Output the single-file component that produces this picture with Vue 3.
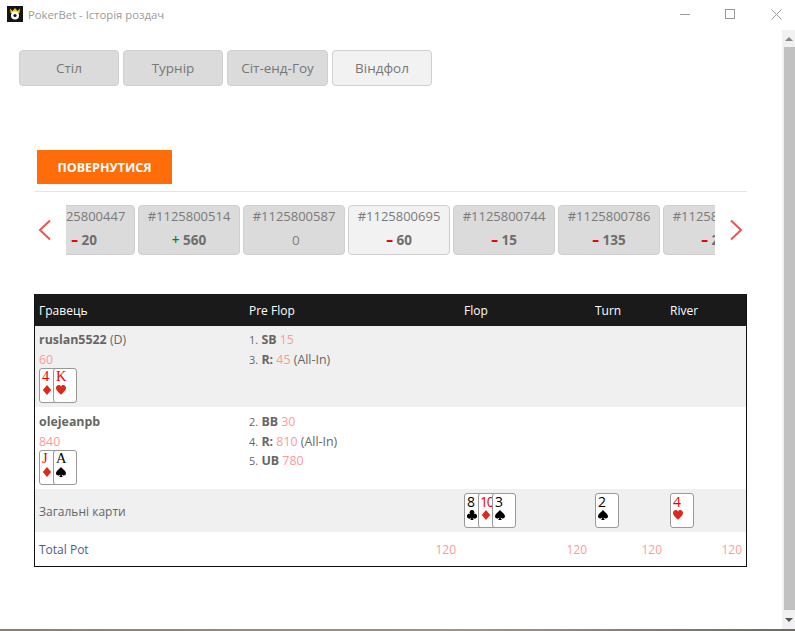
<script setup>
const tabs = [
  { label: 'Стіл', active: false },
  { label: 'Турнір', active: false },
  { label: 'Сіт-енд-Гоу', active: false },
  { label: 'Віндфол', active: true },
]
const hands = [
  { id: '#1125800447', sign: '–', amount: '20', tone: 'loss' },
  { id: '#1125800514', sign: '+', amount: '560', tone: 'win' },
  { id: '#1125800587', sign: '', amount: '0', tone: 'zero' },
  { id: '#1125800695', sign: '–', amount: '60', tone: 'loss', active: true },
  { id: '#1125800744', sign: '–', amount: '15', tone: 'loss' },
  { id: '#1125800786', sign: '–', amount: '135', tone: 'loss' },
  { id: '#1125800812', sign: '–', amount: '20', tone: 'loss' },
]
const suitPaths = {
  d: 'M5 0L9.2 5L5 10L0.8 5Z',
  h: 'M5 9.8C3 7.6 0 5.6 0 3C0 1 1.4 0 2.9 0C4 0 4.7 .7 5 1.6C5.3 .7 6 0 7.1 0C8.6 0 10 1 10 3C10 5.6 7 7.6 5 9.8Z',
  s: 'M5 0C6.5 2 10 4 10 6.3C10 7.8 8.8 8.5 7.8 8.5C7 8.5 6.2 8 5.7 7.5C5.8 8.5 6.2 9.5 7 10H3C3.8 9.5 4.2 8.5 4.3 7.5C3.8 8 3 8.5 2.2 8.5C1.2 8.5 0 7.8 0 6.3C0 4 3.5 2 5 0Z',
  c: 'M5 0A2.4 2.4 0 0 1 6.8 4A2.4 2.4 0 1 1 5.7 7.4C5.8 8.5 6.2 9.5 7 10H3C3.8 9.5 4.2 8.5 4.3 7.4A2.4 2.4 0 1 1 3.2 4A2.4 2.4 0 0 1 5 0Z',
}
const isRed = (s) => s === 'd' || s === 'h'
const players = [
  {
    name: 'ruslan5522', tag: '(D)', stack: '60',
    cards: [{ r: '4', s: 'd' }, { r: 'K', s: 'h' }],
    actions: [
      { n: '1.', a: 'SB', v: '15', x: '' },
      { n: '3.', a: 'R:', v: '45', x: '(All-In)' },
    ],
    shade: true,
  },
  {
    name: 'olejeanpb', tag: '', stack: '840',
    cards: [{ r: 'J', s: 'd' }, { r: 'A', s: 's' }],
    actions: [
      { n: '2.', a: 'BB', v: '30', x: '' },
      { n: '4.', a: 'R:', v: '810', x: '(All-In)' },
      { n: '5.', a: 'UB', v: '780', x: '' },
    ],
    shade: false,
  },
]
const board = [
  [{ r: '8', s: 'c' }, { r: '10', s: 'd' }, { r: '3', s: 's' }],
  [{ r: '2', s: 's' }],
  [{ r: '4', s: 'h' }],
]
</script>

<template>
  <div class="window">
    <header class="titlebar">
      <svg class="logo" width="16" height="16" viewBox="0 0 16 16">
        <rect width="16" height="16" fill="#141414" />
        <path d="M3 2.5 L5.5 5 L8 2 L10.5 5 L13 2.5 L12.5 7 L3.5 7 Z" fill="#f2c81e" />
        <circle cx="8" cy="9.5" r="4" fill="#fff" />
        <circle cx="8" cy="9.5" r="1.6" fill="#141414" />
      </svg>
      <span class="title">PokerBet - Історія роздач</span>
      <div class="controls">
        <svg width="11" height="11" viewBox="0 0 11 11"><path d="M1 5.5H11" stroke="#999" /></svg>
        <svg width="11" height="11" viewBox="0 0 11 11"><rect x="0.5" y="0.5" width="9" height="9" fill="none" stroke="#999" /></svg>
        <svg width="11" height="11" viewBox="0 0 11 11"><path d="M0.5 0.5L10.5 10.5M10.5 0.5L0.5 10.5" stroke="#999" /></svg>
      </div>
    </header>

    <div class="viewport">
      <main class="page">
        <nav class="tabs">
          <button v-for="t in tabs" :key="t.label" class="tab" :class="{ active: t.active }">{{ t.label }}</button>
        </nav>

        <section class="content">
          <button class="back">ПОВЕРНУТИСЯ</button>
          <div class="rule"></div>

          <div class="carousel">
            <svg class="arrow" width="14" height="22" viewBox="0 0 14 22"><path d="M12 1.5L2 11L12 20.5" fill="none" stroke="#ee5252" stroke-width="2" /></svg>
            <div class="strip">
              <div class="track">
                <div v-for="h in hands" :key="h.id" class="hand" :class="{ active: h.active }">
                  <div class="hand-id">{{ h.id }}</div>
                  <div class="hand-amount" :class="h.tone"><span class="sign">{{ h.sign }}</span>&nbsp;<span class="val">{{ h.amount }}</span></div>
                </div>
              </div>
            </div>
            <svg class="arrow" width="14" height="22" viewBox="0 0 14 22"><path d="M2 1.5L12 11L2 20.5" fill="none" stroke="#ee5252" stroke-width="2" /></svg>
          </div>

          <table class="grid">
            <colgroup>
              <col class="c1" /><col class="c2" /><col class="c3" /><col class="c4" /><col class="c5" />
            </colgroup>
            <thead>
              <tr>
                <th>Гравець</th><th>Pre Flop</th><th>Flop</th><th>Turn</th><th>River</th>
              </tr>
            </thead>
            <tbody>
              <tr v-for="p in players" :key="p.name" class="player" :class="{ shade: p.shade }">
                <td>
                  <div class="line"><b class="name">{{ p.name }}</b>&nbsp;<span v-if="p.tag">{{ p.tag }}</span></div>
                  <div class="line amount">{{ p.stack }}</div>
                  <div class="cards">
                    <div v-for="c in p.cards" :key="c.r + c.s" class="card serif" :class="{ red: isRed(c.s) }">
                      <span class="rank">{{ c.r }}</span>
                      <svg class="suit" width="10" height="10" viewBox="0 0 10 10"><path :d="suitPaths[c.s]" /></svg>
                    </div>
                  </div>
                </td>
                <td>
                  <div v-for="a in p.actions" :key="a.n" class="line"><span class="num">{{ a.n }}</span>&nbsp;<b class="name">{{ a.a }}</b>&nbsp;<span class="amount">{{ a.v }}</span><span v-if="a.x">&nbsp;{{ a.x }}</span></div>
                </td>
                <td></td><td></td><td></td>
              </tr>

              <tr class="board shade">
                <td class="small">Загальні карти</td>
                <td></td>
                <td v-for="(street, i) in board" :key="i">
                  <div class="cards">
                    <div v-for="c in street" :key="c.r + c.s" class="card" :class="{ red: isRed(c.s) }">
                      <span class="rank" :class="{ wide: c.r.length > 1 }">{{ c.r }}</span>
                      <svg class="suit" width="10" height="10" viewBox="0 0 10 10"><path :d="suitPaths[c.s]" /></svg>
                    </div>
                  </div>
                </td>
              </tr>

              <tr class="pot">
                <td class="small potlabel">Total Pot</td>
                <td class="amount">120</td>
                <td class="amount">120</td>
                <td class="amount">120</td>
                <td class="amount">120</td>
              </tr>
            </tbody>
          </table>
        </section>
      </main>

      <aside class="scrollbar">
        <div class="sb-btn"><i class="up"></i></div>
        <div class="sb-thumb"></div>
        <div class="sb-btn bottom"><i class="down"></i></div>
      </aside>
    </div>
    <div class="edge"></div>
  </div>
</template>

<style>
html, body { margin: 0; background: #fff; }
</style>

<style scoped>
* { box-sizing: border-box; }
.window {
  width: 795px;
  height: 631px;
  overflow: hidden;
  display: flex;
  flex-direction: column;
  background: #fff;
  font-family: "Open Sans", "Liberation Sans", sans-serif;
  color: #666;
  font-size: 13px;
}
.titlebar {
  height: 30px;
  flex: none;
  display: flex;
  align-items: center;
  padding-left: 7px;
}
.logo { margin-top: -2px; }
.title { margin-left: 5px; margin-top: -1px; font-size: 11.3px; color: #9a9a9a; }
.controls {
  margin-left: auto;
  display: flex;
  gap: 35px;
  padding-right: 13px;
  margin-top: -2px;
}
.viewport { flex: 1; min-height: 0; display: flex; }
.page { flex: 1; min-width: 0; }
.scrollbar {
  width: 13px;
  flex: none;
  background: #f1f1f1;
  display: flex;
  flex-direction: column;
  padding-left: 2px;
}
.sb-btn { height: 17px; flex: none; display: flex; align-items: center; justify-content: center; margin-left: -2px; }
.sb-btn.bottom { height: 19px; }
.sb-thumb { flex: 1; background: #c1c1c1; }
.up { width: 0; height: 0; border: 4px solid transparent; border-top: 0; border-bottom: 4px solid #888; }
.down { width: 0; height: 0; border: 4px solid transparent; border-bottom: 0; border-top: 4px solid #555; }
.edge { height: 2px; flex: none; background: linear-gradient(90deg, #8a7f72, #a09488 60%, #6f6a62); }

.tabs { display: flex; gap: 4px; padding: 20px 0 0 19px; }
.tab {
  width: 100px;
  height: 36px;
  border: 1px solid #cfcfcf;
  border-radius: 4px;
  background: #dbdbdb;
  color: #777;
  font: 13.5px "Open Sans", sans-serif;
  padding: 0;
}
.tab:nth-child(3) { width: 101px; }
.tab.active { background: #f3f2f3; }

.content { margin: 64px 0 0 34px; width: 713px; }
.back {
  display: block;
  margin-left: 3px;
  width: 135px;
  height: 34px;
  border: 0;
  padding: 0;
  background: #ff6d0a;
  color: #fff;
  font: 700 12.5px "Open Sans", sans-serif;
}
.rule { height: 1px; margin-top: 7px; background: #e5e5e5; }

.carousel {
  margin-top: 13px;
  display: flex;
  align-items: center;
  justify-content: space-between;
  padding: 0 4px;
}
.strip { width: 649px; overflow: hidden; }
.track { display: flex; gap: 3px; margin-left: -33px; }
.hand {
  flex: none;
  width: 102px;
  height: 50px;
  border: 1px solid #cfcfcf;
  border-radius: 4px;
  background: #dbdbdb;
  text-align: center;
}
.hand.active { background: #f3f2f3; }
.hand-id { font-size: 13px; line-height: 20px; color: #7a7a7a; }
.hand-amount { margin-top: 4px; line-height: 20px; font-size: 13.5px; }
.val { font-weight: 700; color: #6e6e6e; }
.sign { font-weight: 700; }
.loss .sign { color: #f00000; font-weight: 800; }
.win .sign { color: #0a850a; font-weight: 600; }
.zero .val { font-weight: 400; color: #808080; }

.grid {
  margin-top: 39px;
  width: 713px;
  table-layout: fixed;
  border-collapse: separate;
  border-spacing: 0;
  border: 1px solid #111;
  border-top: 0;
  font-size: 12px;
}
.c1 { width: 209px; }
.c2 { width: 215px; }
.c3 { width: 131px; }
.c4 { width: 75px; }
.c5 { width: 81px; }
th {
  height: 32px;
  padding: 1px 4px 0;
  background: #1a1a1a;
  color: #fff;
  font-weight: 400;
  text-align: left;
}
th:first-child, td:first-child { padding-left: 4px; }
td { padding: 0 5px; vertical-align: top; }
th:not(:first-child), .board td:not(:first-child) { padding-left: 5px; }
.shade td { background: #f0f0f0; }
.player td { padding-top: 4px; padding-bottom: 4px; }
.player:not(.shade) td { padding-top: 5px; }
.line { line-height: 19.5px; color: #666; font-size: 12.4px; }
.name { color: #666; }
.num { font-size: 11px; }
.amount { color: #f99; }
.line.amount { color: #f99; }
.cards { display: flex; }
.player .cards { margin-top: -1px; }
.card {
  position: relative;
  width: 24px;
  height: 35px;
  flex: none;
  border: 1px solid #999;
  border-radius: 3px;
  background: #fff;
  color: #000;
  fill: #000;
  display: flex;
  flex-direction: column;
  align-items: flex-start;
  padding-left: 2px;
  overflow: hidden;
}
.card + .card { margin-left: -10px; }
.card.red { color: #e00; fill: #d92a1c; }
.rank { font-size: 14px; line-height: 15px; margin-top: 0; }
.rank.wide { margin-left: -1px; letter-spacing: -1.2px; }
.suit { margin-top: 1px; margin-left: 0; flex: none; }
.card.serif .rank { font-family: "Liberation Serif", serif; font-size: 14.5px; }

.board td { padding-top: 4px; padding-bottom: 4px; height: 43px; }
.board .small { vertical-align: middle; padding-top: 5px; }
.small { color: #666; }
.pot td { height: 34px; vertical-align: middle; text-align: right; padding-right: 3px; }
.pot td:last-child { padding-right: 4px; }
.pot .potlabel { text-align: left; color: #4d5d8a; }
</style>
